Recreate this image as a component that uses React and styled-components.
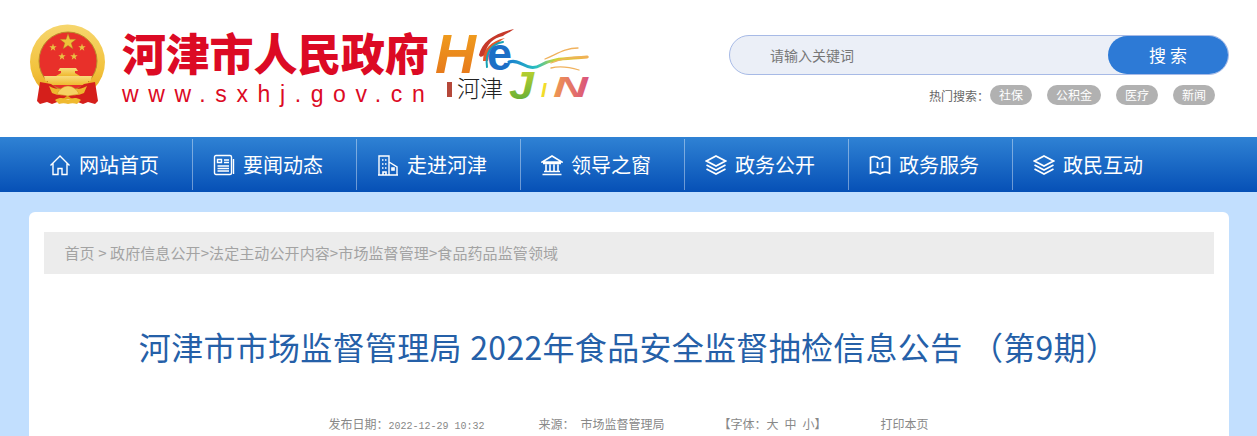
import React from "react";
import styled, { createGlobalStyle } from "styled-components";

const Global = createGlobalStyle`
  html, body { margin: 0; padding: 0; background: #c2dffe; }
  body { font-family: "Noto Sans CJK SC", "Liberation Sans", sans-serif; }
  * { box-sizing: border-box; }
`;
const CJK = `"Noto Sans CJK SC", "Liberation Sans", sans-serif`;
const Page = styled.div`height: 436px; overflow: hidden; background: #c2dffe;`;
const Header = styled.header`
  height: 137px; background: #fff; display: flex; justify-content: space-between; padding: 0 28px 0 29px;
`;
const Brand = styled.div`display: flex; align-items: flex-start; padding-top: 24px;`;
const SiteName = styled.div`margin-left: 15px; width: 310px; padding-top: 6px;`;
const SiteTitle = styled.div`
  font: 900 44px/44px ${CJK}; color: #dc0a24; white-space: nowrap; letter-spacing: -0.2px;
`;
const SiteUrl = styled.div`
  font: 400 23px/26px "Liberation Sans", sans-serif; color: #dc0a24; letter-spacing: 9.6px; white-space: nowrap; margin-top: 7px;
`;
const LogoArt = styled.svg`display: block; margin: -3px 0 0 1px;`;
const EmblemArt = styled.svg`display: block; flex: none;`;
const SearchCol = styled.div`width: 500px; padding-top: 35px; display: flex; flex-direction: column; align-items: flex-end;`;
const SearchBox = styled.div`
  width: 500px; height: 40px; border: 1px solid #a7bae6; border-radius: 20px; background: #ebeff7;
  display: flex; align-items: center; justify-content: space-between; padding-left: 40px;
`;
const Placeholder = styled.span`font-size: 14px; color: #777;`;
const SearchBtn = styled.div`
  width: 120px; height: 38px; border-radius: 19px; background: #2d7ad6; color: #fff;
  font-size: 17px; letter-spacing: 4px; text-indent: 4px; text-align: center; line-height: 38px;
`;
const Hot = styled.div`display: flex; align-items: center; margin-top: 10px; padding-right: 14px; height: 20px;`;
const HotLabel = styled.span`font-size: 12px; color: #666; margin-right: 1px;`;
const Tag = styled.span`
  height: 20px; padding: 0 9px; margin-left: ${p => (p.$first ? 0 : 15)}px; border-radius: 10px; background: #b1b1b1;
  color: #fff; font-size: 12px; line-height: 20px;
`;
const Nav = styled.nav`
  height: 55px; background: linear-gradient(#2f82d4, #0650b6); display: flex; padding-left: 29px; align-items: center;
`;
const NavItem = styled.a`
  width: 164px; height: 51px; display: flex; align-items: center; gap: 8px; padding-left: 20px; color: #fff;
  font-size: 20px; border-right: 1px solid ${p => (p.$last ? "transparent" : "rgba(255,255,255,.4)")};
`;
const NavIcon = styled.svg`width: 22px; height: 22px; flex: none; fill: none; stroke: #fff; stroke-width: 1.4;`;
const Card = styled.main`
  width: 1200px; margin: 20px auto 0; background: #fff; border-radius: 6px; padding: 20px 15px; height: 400px;
`;
const Crumb = styled.div`
  height: 42px; background: #ececec; padding-left: 21px; line-height: 42px; font-size: 15px; letter-spacing: .1px; color: #a3a3a3;
`;
const Title = styled.h1`
  margin: 47px 0 0; text-align: center; font: 400 32px/50px ${CJK}; letter-spacing: .3px; word-spacing: 1px; color: #2560a8; white-space: pre;
`;
const Meta = styled.div`
  margin-top: 43px; display: flex; justify-content: center; gap: 54px; font-size: 12px; line-height: 20px; color: #888; word-spacing: 3.3px;
`;
const MetaItem = styled.span`white-space: pre;`;
const Mono = styled.span`font-family: "Liberation Mono", monospace; font-size: 10px; word-spacing: 0;`;

const starPoints = (cx, cy, r) =>
  Array.from({ length: 10 }, (_, i) => {
    const a = -Math.PI / 2 + (i * Math.PI) / 5;
    const d = i % 2 ? r * 0.4 : r;
    return `${(cx + d * Math.cos(a)).toFixed(2)},${(cy + d * Math.sin(a)).toFixed(2)}`;
  }).join(" ");

const Emblem = () => (
  <EmblemArt width="78" height="82" viewBox="0 0 78 82">
    <defs>
      <linearGradient id="gold" x1="0" y1="0" x2="0" y2="1">
        <stop offset="0" stopColor="#f6d66e" /><stop offset=".6" stopColor="#f2c23c" /><stop offset="1" stopColor="#e6a21c" />
      </linearGradient>
      <linearGradient id="roof" x1="0" y1="0" x2="0" y2="1">
        <stop offset="0" stopColor="#f8dc7c" /><stop offset="1" stopColor="#efb92f" />
      </linearGradient>
    </defs>
    <circle cx="38.500" cy="38" r="37.500" fill="url(#gold)" />
    <circle cx="39" cy="37" r="29" fill="#e8302a" stroke="#b98a2a" strokeWidth="1" />
    <polygon points={starPoints(39, 18, 8.500)} fill="#eec23a" stroke="#a5761e" strokeWidth=".4" />
    <polygon points={starPoints(24, 23.500, 3.900)} fill="#e9c243" />
    <polygon points={starPoints(53, 23.500, 3.900)} fill="#e9c243" />
    <polygon points={starPoints(33, 32.500, 3.900)} fill="#e9c243" />
    <polygon points={starPoints(45, 32.500, 3.900)} fill="#e9c243" />
    <path d="M31 44h16l2 3h-3v2l5 3H27l5-3v-2h-3z" fill="url(#roof)" />
    <path d="M15 52h48l-1.500 5H16.500zM19 57h40v4H19z" fill="url(#roof)" />
    <path d="M11 58L8 77l3 3 7-2 5 2 8-3 7-5-16-12z" fill="#d51f1b" />
    <path d="M66 58l3 19-3 3-7-2-5 2-8-3-7-5 16-12z" fill="#d51f1b" />
    <path d="M20 62c6 4 12 3 19 3s13 1 19-3l-3 7c-6 3-10 2-16 2s-10 1-16-2z" fill="#eeb52e" />
    <path d="M28 70c2-5 7-8 11-8s9 3 11 8l-11 2z" fill="#f6d163" stroke="#cf8a1b" strokeWidth=".5" />
    <path d="M26 76c5-3 9-2 13 0 4-2 8-3 13 0l-4 4c-3-1-6-1-9 0-3-1-6-1-9 0z" fill="#efb92f" />
  </EmblemArt>
);

const Hejin = () => (
  <LogoArt width="160" height="90" viewBox="0 -6 160 90">
    <defs>
      <linearGradient id="hG" x1="0" y1="0" x2="0" y2="1"><stop offset="0" stopColor="#f2a51e" /><stop offset="1" stopColor="#e4701a" /></linearGradient>
      <linearGradient id="tail" x1="0" y1="0" x2="1" y2="0">
        <stop offset="0" stopColor="#1a7fd0" /><stop offset=".35" stopColor="#29c0c0" /><stop offset=".6" stopColor="#cfd52f" /><stop offset="1" stopColor="#f3b04a" />
      </linearGradient>
      <linearGradient id="jG" x1="0" y1="0" x2="0" y2="1"><stop offset="0" stopColor="#c8d62c" /><stop offset="1" stopColor="#55a83a" /></linearGradient>
      <linearGradient id="nG" x1="0" y1="0" x2="1" y2="0"><stop offset="0" stopColor="#ef9a50" /><stop offset="1" stopColor="#d9507f" /></linearGradient>
    </defs>
    <text x="2" y="46" fontFamily="'Liberation Sans', sans-serif" fontWeight="700" fontStyle="italic" fontSize="56" textLength="41" lengthAdjust="spacingAndGlyphs" fill="url(#hG)">H</text>
    <path d="M46 28C49 15 60 7 81 2C76 6 72 7 70 9C60 11 54 17 52 27C50 30 47 31 46 28Z" fill="#c6392a" />
    <path d="M50 34C50 22 58 14 72 11C62 17 57 23 55 34Z" fill="#e4572a" />
    <path d="M54 40C52 26 58 17 70 15" fill="none" stroke="#17a3b6" strokeWidth="2" strokeLinecap="round" />
    <text x="54" y="43" fontFamily="'Liberation Sans', sans-serif" fontWeight="700" fontSize="46" textLength="25" lengthAdjust="spacingAndGlyphs" fill="#1c6fc6">e</text>
    <path d="M76 35C88 31 94 46 108 38C120 31 134 32 154 30" fill="none" stroke="url(#tail)" strokeWidth="3" strokeLinecap="round" />
    <path d="M112 32C124 27 132 21 145 21M118 36C130 31 140 29 155 30M118 41C126 39 136 40 146 43" fill="none" stroke="#f0b25e" strokeWidth="1.300" strokeLinecap="round" />
    <rect x="14" y="55" width="5" height="15" fill="#b5483a" />
    <text x="24" y="70" fontFamily={CJK} fontSize="23" fontWeight="300" fill="#222">河津</text>
    <text x="76" y="72" fontFamily="'Liberation Sans', sans-serif" fontWeight="700" fontStyle="italic" fontSize="38" textLength="25" lengthAdjust="spacingAndGlyphs" fill="url(#jG)">J</text>
    <text x="108" y="70" fontFamily="'Liberation Sans', sans-serif" fontWeight="700" fontStyle="italic" fontSize="20" fill="#f2dc2a">I</text>
    <text x="120" y="70" fontFamily="'Liberation Sans', sans-serif" fontWeight="700" fontStyle="italic" fontSize="30" textLength="35" lengthAdjust="spacingAndGlyphs" fill="url(#nG)">N</text>
  </LogoArt>
);

const icons = {
  home: <path d="M1.500 11.500L11 2l9.500 9.500M4 9.500V20.500H9V14.500H13V20.500H18V9.500" />,
  news: <><rect x="1.500" y="1.500" width="17" height="19" rx="1.500" /><path d="M20.500 5v15M4.500 5.500h4v3h-4zM11 6h5M11 8.500h5M4.500 12h11.500M4.500 14.500h11.500M4.500 17h11.500" /></>,
  building: <><path d="M2 21V2h10v19M12 8l8 5v8M1 21h20" /><path d="M5 6h1.500M8 6h1.500M5 10h1.500M8 10h1.500M5 14h1.500M8 14h1.500M6 21v-3h3v3M15 14h2v2h-2z" strokeWidth="1.600" /></>,
  bank: <><path d="M11 2L21 8H1zM2 9.500h18M5 10.500v6.500M9 10.500v6.500M13 10.500v6.500M17 10.500v6.500M3 17.500h16M1.500 20.500h19" strokeWidth="1.600" /></>,
  layers: <><path d="M11 2l9.500 5-9.500 5-9.500-5zM1.500 11l9.500 5 9.500-5M1.500 15l9.500 5 9.500-5" strokeWidth="1.700" /></>,
  map: <path d="M1.500 3.500C5 2 8 2.500 11 5c3-2.500 6-3 9.500-1.500v15.500C17 17.500 14 18 11 20c-3-2-6-2.500-9.500-1V3.500zM8.500 8v6M13.500 8v6" strokeWidth="1.700" />,
};
const navData = [
  ["home", "网站首页"], ["news", "要闻动态"], ["building", "走进河津"], ["bank", "领导之窗"],
  ["layers", "政务公开"], ["map", "政务服务"], ["layers", "政民互动"],
];

export default function App() {
  return (
    <Page>
      <Global />
      <Header>
        <Brand>
          <Emblem />
          <SiteName>
            <SiteTitle>河津市人民政府</SiteTitle>
            <SiteUrl>www.sxhj.gov.cn</SiteUrl>
          </SiteName>
          <Hejin />
        </Brand>
        <SearchCol>
          <SearchBox>
            <Placeholder>请输入关键词</Placeholder>
            <SearchBtn>搜索</SearchBtn>
          </SearchBox>
          <Hot>
            <HotLabel>热门搜索：</HotLabel>
            <Tag $first>社保</Tag><Tag>公积金</Tag><Tag>医疗</Tag><Tag>新闻</Tag>
          </Hot>
        </SearchCol>
      </Header>
      <Nav>
        {navData.map(([icon, label], i) => (
          <NavItem key={label} $last={i === navData.length - 1}>
            <NavIcon viewBox="0 0 22 22">{icons[icon]}</NavIcon>
            {label}
          </NavItem>
        ))}
      </Nav>
      <Card>
        <Crumb>首页 &gt; 政府信息公开&gt;法定主动公开内容&gt;市场监督管理&gt;食品药品监管领域</Crumb>
        <Title>河津市市场监督管理局 2022年食品安全监督抽检信息公告 （第9期）</Title>
        <Meta>
          <MetaItem>发布日期：<Mono>2022-12-29 10:32</Mono></MetaItem>
          <MetaItem>来源： 市场监督管理局</MetaItem>
          <MetaItem>【字体：大 中 小】</MetaItem>
          <MetaItem>打印本页</MetaItem>
        </Meta>
      </Card>
    </Page>
  );
}
